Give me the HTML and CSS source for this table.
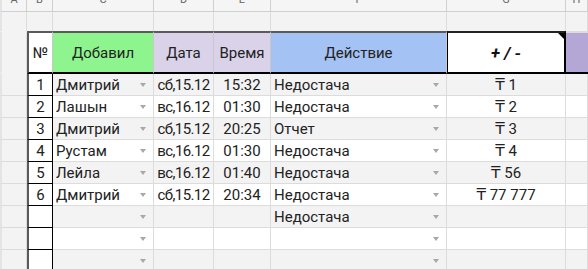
FILE: index.html
```html
<!DOCTYPE html>
<html lang="ru">
<head>
<meta charset="utf-8">
<title>Sheet</title>
<link rel="stylesheet" href="styles.css">
</head>
<body>
<div class="sheet">
  <div class="r letters">
    <div class="c ca"><span>A</span></div>
    <div class="c"><span>B</span></div>
    <div class="c"><span>C</span></div>
    <div class="c"><span>D</span></div>
    <div class="c"><span>E</span></div>
    <div class="c"><span>F</span></div>
    <div class="c"><span>G</span></div>
    <div class="c"><span>H</span></div>
  </div>
  <div class="r gap">
    <div class="c ca"></div><div class="c"></div><div class="c"></div><div class="c"></div>
    <div class="c"></div><div class="c"></div><div class="c"></div><div class="c"></div>
  </div>
  <div class="r head">
    <div class="c ca"></div>
    <div class="c num">№</div>
    <div class="c green">Добавил</div>
    <div class="c lav">Дата</div>
    <div class="c lav">Время</div>
    <div class="c blue">Действие</div>
    <div class="c pm"><b><i>+ / -</i></b><span class="note"></span></div>
    <div class="c purple"></div>
  </div>

  <div class="r data odd">
    <div class="c ca"></div><div class="c num">1</div>
    <div class="c dd"><span>Дмитрий</span><span class="arr"></span></div>
    <div class="c mid date">сб,15.12</div><div class="c mid">15:32</div>
    <div class="c dd"><span>Недостача</span><span class="arr"></span></div>
    <div class="c mid">₸ 1</div><div class="c"></div>
  </div>
  <div class="r data">
    <div class="c ca"></div><div class="c num">2</div>
    <div class="c dd"><span>Лашын</span><span class="arr"></span></div>
    <div class="c mid date">вс,16.12</div><div class="c mid">01:30</div>
    <div class="c dd"><span>Недостача</span><span class="arr"></span></div>
    <div class="c mid">₸ 2</div><div class="c"></div>
  </div>
  <div class="r data odd">
    <div class="c ca"></div><div class="c num">3</div>
    <div class="c dd"><span>Дмитрий</span><span class="arr"></span></div>
    <div class="c mid date">сб,15.12</div><div class="c mid">20:25</div>
    <div class="c dd"><span>Отчет</span><span class="arr"></span></div>
    <div class="c mid">₸ 3</div><div class="c"></div>
  </div>
  <div class="r data">
    <div class="c ca"></div><div class="c num">4</div>
    <div class="c dd"><span>Рустам</span><span class="arr"></span></div>
    <div class="c mid date">вс,16.12</div><div class="c mid">01:30</div>
    <div class="c dd"><span>Недостача</span><span class="arr"></span></div>
    <div class="c mid">₸ 4</div><div class="c"></div>
  </div>
  <div class="r data odd">
    <div class="c ca"></div><div class="c num">5</div>
    <div class="c dd"><span>Лейла</span><span class="arr"></span></div>
    <div class="c mid date">вс,16.12</div><div class="c mid">01:40</div>
    <div class="c dd"><span>Недостача</span><span class="arr"></span></div>
    <div class="c mid">₸ 56</div><div class="c"></div>
  </div>
  <div class="r data">
    <div class="c ca"></div><div class="c num">6</div>
    <div class="c dd"><span>Дмитрий</span><span class="arr"></span></div>
    <div class="c mid date">сб,15.12</div><div class="c mid">20:34</div>
    <div class="c dd"><span>Недостача</span><span class="arr"></span></div>
    <div class="c mid">₸ 77 777</div><div class="c"></div>
  </div>
  <div class="r data odd">
    <div class="c ca"></div><div class="c num"></div>
    <div class="c dd"><span></span><span class="arr"></span></div>
    <div class="c mid"></div><div class="c mid"></div>
    <div class="c dd"><span>Недостача</span><span class="arr"></span></div>
    <div class="c mid"></div><div class="c"></div>
  </div>
  <div class="r data">
    <div class="c ca"></div><div class="c num"></div>
    <div class="c dd"><span></span><span class="arr"></span></div>
    <div class="c mid"></div><div class="c mid"></div>
    <div class="c dd"><span></span><span class="arr"></span></div>
    <div class="c mid"></div><div class="c"></div>
  </div>
  <div class="r data odd">
    <div class="c ca"></div><div class="c num"></div>
    <div class="c dd"><span></span><span class="arr"></span></div>
    <div class="c mid"></div><div class="c mid"></div>
    <div class="c dd"><span></span><span class="arr"></span></div>
    <div class="c mid"></div><div class="c"></div>
  </div>
</div>
</body>
</html>
```
FILE: styles.css
```css
html, body {
  margin: 0;
  padding: 0;
  background: #ffffff;
  overflow: hidden;
}
.sheet {
  display: grid;
  grid-template-columns: 27px 26px 101px 60px 57px 176px 119px 22px;
  grid-template-rows: 12px 19px 43px repeat(9, 22px);
  width: 588px;
  font-family: "Roboto", "DejaVu Sans", sans-serif;
  font-size: 15px;
  color: #222222;
}
.r { display: contents; }
.c {
  box-sizing: border-box;
  border-right: 1px solid #dcdcdc;
  border-bottom: 1px solid #dcdcdc;
  display: flex;
  align-items: center;
  overflow: hidden;
  white-space: nowrap;
  min-width: 0;
  position: relative;
}
.ca {
  background: #f3f3f3;
  border-left: 2px solid #e4e4e4;
}

/* column letters */
.letters > .c {
  background: #f5f5f5;
  justify-content: center;
  align-items: flex-end;
  font-size: 11px;
  color: #666666;
  line-height: 12px;
  padding-bottom: 5px;
  border-bottom-color: #cfcfcf;
  border-right-color: #cfcfcf;
}
.gap > .c {
  background: #f3f3f3;
  border-bottom: none;
}

/* header row */
.head > .c {
  justify-content: center;
  border-bottom: 2px solid #000000;
  border-top: 2px solid #5a5a5a;
  border-right-color: #c8c8c8;
}
.head > .ca {
  border-top: 2px solid #f3f3f3;
  border-bottom: 2px solid #f3f3f3;
  border-right-color: #dcdcdc;
}
.head > .num {
  background: #ffffff;
  border-left: 2px solid #5a5a5a;
  border-right: 1px solid #c8c8c8;
}
.green { background: #8ef58e; }
.lav { background: #d9d2e9; }
.blue { background: #a4c2f4; }
.purple { background: #b4a7d6; }
.head > .purple {
  border-top: 2px solid #dcdcdc;
  border-right: none;
}
.head > .pm {
  background: #ffffff;
  border-left: 1px solid #000000;
  border-right: 2px solid #000000;
  border-top: 2px solid #222222;
  font-size: 17px;
  letter-spacing: 0;
  color: #111111;
}
.note {
  position: absolute;
  top: 0;
  right: 0;
  width: 0;
  height: 0;
  border-top: 6px solid #000000;
  border-left: 6px solid transparent;
}

/* data rows */
.data > .c { background: #ffffff; }
.data.odd > .c { background: #f3f3f3; }
.data > .ca { background: #f3f3f3; }
.data > .num {
  background: #ffffff;
  justify-content: center;
  border-left: 2px solid #5a5a5a;
  border-right: 1px solid #000000;
  border-bottom: 1px solid #000000;
}
.data.odd > .num { background: #ffffff; }
.mid { justify-content: center; }
.date { letter-spacing: -0.6px; }
.dd {
  justify-content: space-between;
  padding: 0 7px 0 3px;
}
.arr {
  width: 0;
  height: 0;
  border-left: 3.5px solid transparent;
  border-right: 3.5px solid transparent;
  border-top: 4px solid #a8a8a8;
  flex: none;
}
```
